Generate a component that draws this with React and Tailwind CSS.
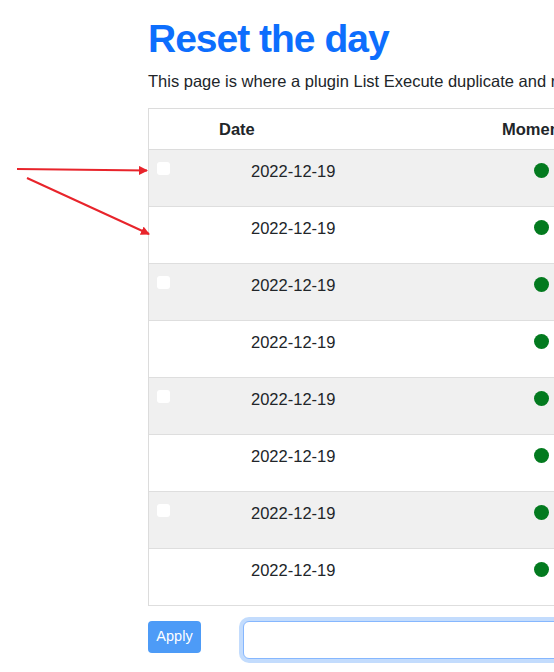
import React from 'react'

const rows = Array.from({ length: 8 }, (_, i) => ({ date: '2022-12-19', selectable: i % 2 === 0 }))

// red annotation arrows drawn over the left margin
const Arrows = () => (
  <svg className="absolute left-0 top-0 pointer-events-none" width="160" height="250" viewBox="0 0 160 250">
    <defs>
      <marker id="head" markerWidth="9" markerHeight="9" refX="8" refY="4.5" orient="auto" markerUnits="userSpaceOnUse">
        <path d="M0,0 L9,4.5 L0,9 z" fill="#e8242b" />
      </marker>
    </defs>
    <line x1="17" y1="169" x2="147" y2="170.5" stroke="#e8242b" strokeWidth="2" markerEnd="url(#head)" />
    <line x1="27" y1="178" x2="149" y2="234" stroke="#e8242b" strokeWidth="2" markerEnd="url(#head)" />
  </svg>
)

export default function App() {
  return (
    <div className="relative w-[554px] h-[672px] overflow-hidden bg-white text-[#212529]"
         style={{ fontFamily: '"Liberation Sans", Arial, sans-serif' }}>
      <div className="pl-[148px] pt-[15px] w-[760px]">
        <h1 className="text-[39px] leading-[47px] font-bold tracking-[-1px] text-[#0d6efd]">Reset the day</h1>
        <p className="mt-[7px] text-[16.5px] leading-[24px] whitespace-nowrap">
          This page is where a plugin List Execute duplicate and removes entries for the day.
        </p>

        {/* table */}
        <div className="mt-[15px] border-l border-t border-[#dcdcdc]">
          <div className="flex items-center h-[41px] border-b border-[#dcdcdc] font-bold text-[16.5px]">
            <span className="w-[70px]" />
            <span className="w-[283px]">Date</span>
            <span>Moment</span>
          </div>
          {rows.map((r, i) => (
            <div key={i} className={`flex h-[57px] border-b border-[#dedede] ${r.selectable ? 'bg-[#f0f0f0]' : 'bg-white'}`}>
              <div className="w-[102px] pl-[8px] pt-[12px]">
                {r.selectable && <div className="w-[13px] h-[13px] rounded-[3px] bg-white" />}
              </div>
              <div className="w-[283px] pt-[9px] text-[16.5px] leading-[24px]">{r.date}</div>
              <div className="pt-[13px]">
                <div className="w-[15px] h-[15px] rounded-full bg-[#037a1f]" />
              </div>
            </div>
          ))}
        </div>

        {/* actions */}
        <div className="flex items-start mt-[15px]">
          <button className="w-[53px] h-[32px] rounded-[4px] bg-[#4d9bf7] text-white text-[14.5px]">Apply</button>
          <input className="ml-[42px] w-[400px] h-[38px] rounded-[6px] border border-[#86b7fe] outline-none ring-4 ring-[#c3dcfd] bg-white" />
        </div>
      </div>
      <Arrows />
    </div>
  )
}
